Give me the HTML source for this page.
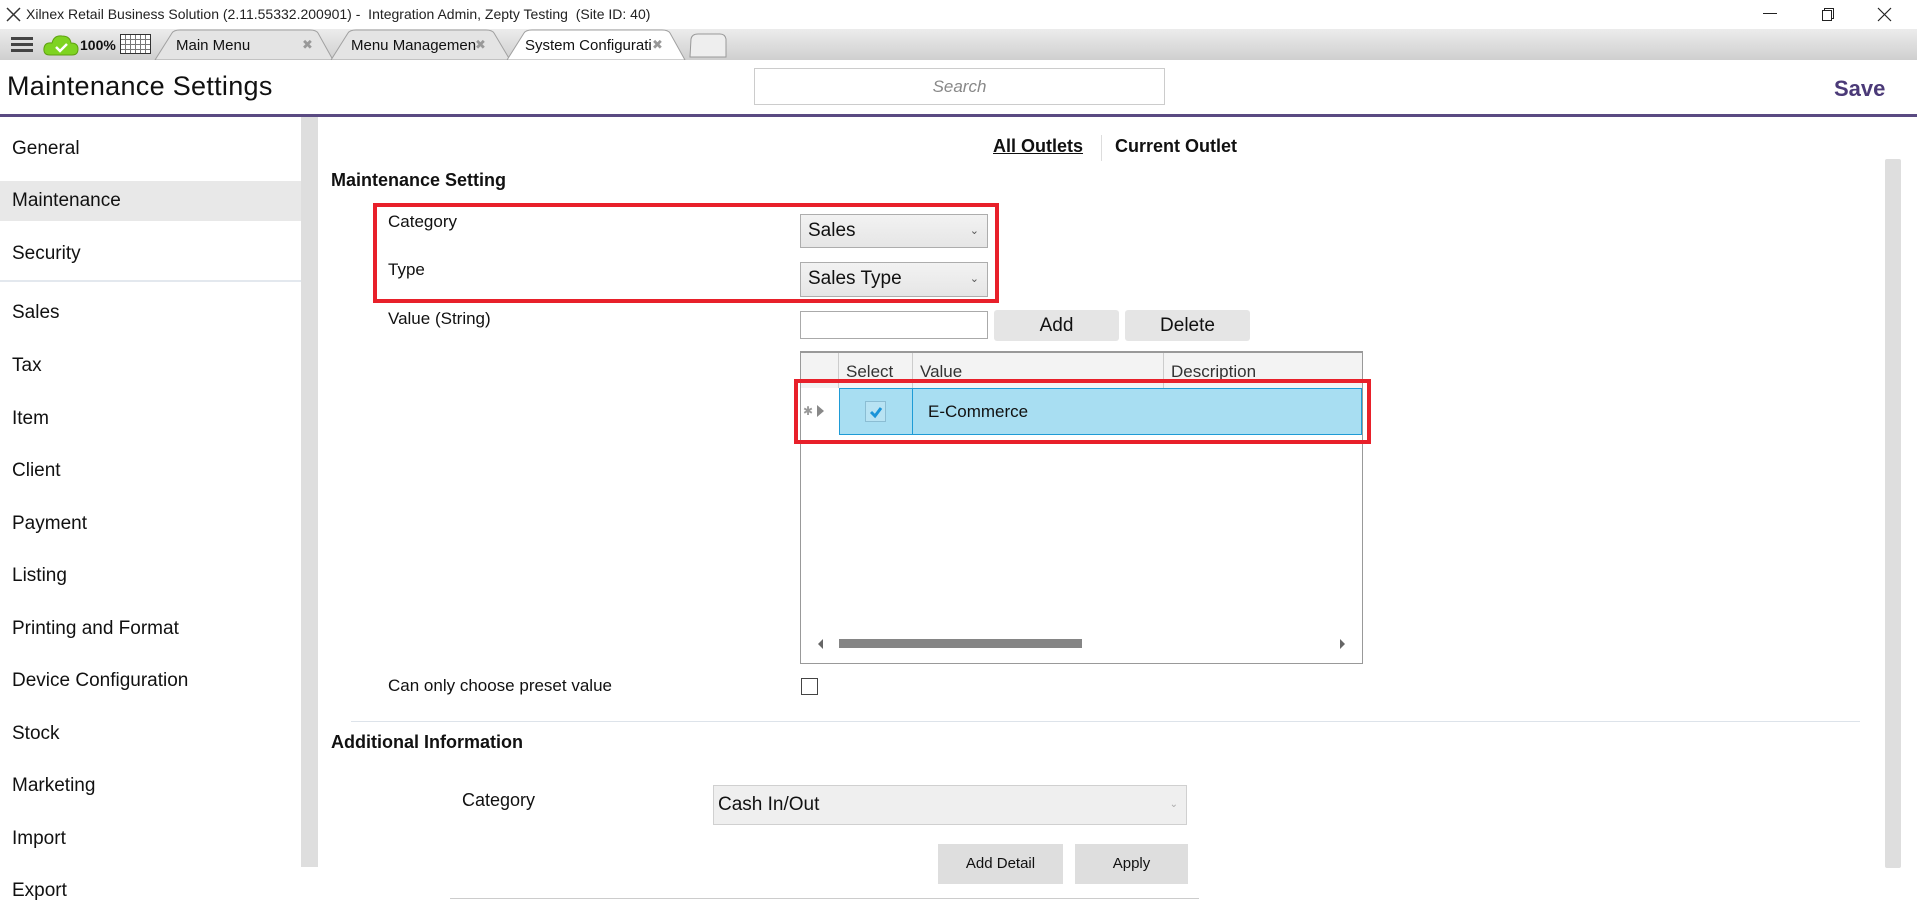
<!DOCTYPE html>
<html><head><meta charset="utf-8"><style>
*{margin:0;padding:0;box-sizing:border-box}
body{width:1917px;height:917px;position:relative;overflow:hidden;background:#fff;font-family:"Liberation Sans",sans-serif;color:#111}
.a{position:absolute;white-space:nowrap}
.nav{position:absolute;left:12px;font-size:19px;color:#111}
.lbl{font-size:17px}
.dd{position:absolute;border:1px solid #adadad;background:linear-gradient(#f2f2f2,#e6e6e6);font-size:19px;padding-left:7px;line-height:32px}
.dd i{position:absolute;right:8px;top:0;font-style:normal;font-size:11px;color:#555}
.btn{position:absolute;background:#e5e5e5;border-radius:3px;text-align:center;font-size:19px}
</style></head><body>
<!-- title bar -->
<svg class="a" style="left:6px;top:7px" width="15" height="15"><path d="M1 1 L14 14 M14 1 L1 14" stroke="#333" stroke-width="1.5"/></svg>
<div class="a" style="left:26px;top:6px;font-size:14px;color:#222">Xilnex Retail Business Solution (2.11.55332.200901) -&nbsp; Integration Admin, Zepty Testing&nbsp; (Site ID: 40)</div>
<div class="a" style="left:1763px;top:13px;width:14px;height:1px;background:#222"></div>
<div class="a" style="left:1824px;top:8px;width:10px;height:11px;border:1px solid #222"></div>
<div class="a" style="left:1822px;top:10px;width:10px;height:11px;border:1px solid #222;background:#fff"></div>
<svg class="a" style="left:1877px;top:7px" width="15" height="15"><path d="M1 1 L14 14 M14 1 L1 14" stroke="#222" stroke-width="1.2"/></svg>
<!-- tab bar -->
<div class="a" style="left:0;top:29px;width:1917px;height:31px;background:linear-gradient(#ececec,#cfcfcf)"></div>
<div class="a" style="left:11px;top:37px;width:22px;height:3px;background:#444;box-shadow:0 6px 0 #444,0 12px 0 #444"></div>
<svg class="a" style="left:42px;top:33px" width="38" height="24"><path d="M8 22 Q1 22 2 15 Q3 9 10 10 Q12 2 20 3 Q28 3 29 10 Q36 10 36 16 Q36 22 30 22Z" fill="#7ed321" stroke="#5ea010"/><path d="M14 14 l4 4 l7 -7" stroke="#fff" stroke-width="2.5" fill="none"/></svg>
<div class="a" style="left:80px;top:37px;font-size:14px;font-weight:bold">100%</div>
<div class="a" style="left:120px;top:34px;width:31px;height:20px;border:1px solid #333;background:#fff;background-image:linear-gradient(90deg,transparent 3px,#777 3px,#777 4px,transparent 4px),linear-gradient(transparent 3px,#777 3px,#777 4px,transparent 4px);background-size:5px 5px;background-position:1px 1px"></div>
<svg class="a" style="left:150px;top:29px" width="590" height="31">
<path d="M5 31 L22 4 Q24 1 30 1 L160 1 Q166 1 168 4 L183 31Z" fill="#e4e4e4" stroke="#a0a0a0"/>
<path d="M181 31 L198 4 Q200 1 206 1 L336 1 Q342 1 344 4 L360 31Z" fill="#e4e4e4" stroke="#a0a0a0"/>
<path d="M357 31 L374 4 Q376 1 382 1 L512 1 Q518 1 520 4 L535 31Z" fill="#fff" stroke="#a0a0a0"/>
<path d="M540 28 L541 10 Q542 5 548 5 L570 5 Q575 5 576 10 L576 28Z" fill="#eee" stroke="#999"/>
</svg>
<div class="a" style="left:176px;top:37px;font-size:15px">Main Menu</div>
<div class="a" style="left:302px;top:37px;font-size:13px;color:#999">✖</div>
<div class="a" style="left:351px;top:37px;font-size:15px">Menu Managemen</div>
<div class="a" style="left:475px;top:37px;font-size:13px;color:#999">✖</div>
<div class="a" style="left:525px;top:37px;font-size:15px">System Configurati</div>
<div class="a" style="left:652px;top:37px;font-size:13px;color:#999">✖</div>
<!-- header -->
<div class="a" style="left:7px;top:71px;font-size:27px;color:#111;letter-spacing:0.3px">Maintenance Settings</div>
<div class="a" style="left:754px;top:68px;width:411px;height:37px;border:1px solid #ccc;text-align:center;line-height:35px;font-size:17px;font-style:italic;color:#888">Search</div>
<div class="a" style="left:1834px;top:76px;font-size:22px;font-weight:bold;color:#4b3a78">Save</div>
<div class="a" style="left:0;top:114px;width:1917px;height:3px;background:#5a4a82"></div>
<!-- sidebar -->
<div class="a" style="left:0;top:181px;width:301px;height:40px;background:#e8e8e8"></div>
<div class="a" style="left:0;top:280px;width:301px;height:2px;background:#e3e8ee"></div>
<div class="a" style="left:301px;top:117px;width:17px;height:750px;background:#dedede"></div>
<div class="nav" style="top:138px">General</div>
<div class="nav" style="top:190px">Maintenance</div>
<div class="nav" style="top:243px">Security</div>
<div class="nav" style="top:302px">Sales</div>
<div class="nav" style="top:355px">Tax</div>
<div class="nav" style="top:408px">Item</div>
<div class="nav" style="top:460px">Client</div>
<div class="nav" style="top:513px">Payment</div>
<div class="nav" style="top:565px">Listing</div>
<div class="nav" style="top:618px">Printing and Format</div>
<div class="nav" style="top:670px">Device Configuration</div>
<div class="nav" style="top:723px">Stock</div>
<div class="nav" style="top:775px">Marketing</div>
<div class="nav" style="top:828px">Import</div>
<div class="nav" style="top:880px">Export</div>
<!-- content -->
<div class="a" style="left:993px;top:136px;font-size:18px;font-weight:bold;text-decoration:underline">All Outlets</div>
<div class="a" style="left:1101px;top:135px;width:1px;height:26px;background:#ddd"></div>
<div class="a" style="left:1115px;top:136px;font-size:18px;font-weight:bold">Current Outlet</div>
<div class="a" style="left:1885px;top:159px;width:16px;height:709px;background:#dedede;border-radius:2px"></div>
<div class="a" style="left:331px;top:170px;font-size:18px;font-weight:bold">Maintenance Setting</div>
<div class="a" style="left:373px;top:203px;width:626px;height:100px;border:4px solid #e8202a"></div>
<div class="a lbl" style="left:388px;top:212px">Category</div>
<div class="a lbl" style="left:388px;top:260px">Type</div>
<div class="dd" style="left:800px;top:214px;width:188px;height:34px">Sales<i>⌄</i></div>
<div class="dd" style="left:800px;top:262px;width:188px;height:35px">Sales Type<i>⌄</i></div>
<div class="a lbl" style="left:388px;top:309px">Value (String)</div>
<div class="a" style="left:800px;top:311px;width:188px;height:28px;border:1px solid #aaa"></div>
<div class="btn" style="left:994px;top:310px;width:125px;height:31px;line-height:31px">Add</div>
<div class="btn" style="left:1125px;top:310px;width:125px;height:31px;line-height:31px">Delete</div>
<!-- grid -->
<div class="a" style="left:800px;top:351px;width:563px;height:313px;border:1px solid #999;border-top:2px solid #999"></div>
<div class="a" style="left:801px;top:353px;width:561px;height:35px;background:#f3f3f3"></div>
<div class="a" style="left:838px;top:353px;width:1px;height:35px;background:#ccc"></div>
<div class="a" style="left:912px;top:353px;width:1px;height:35px;background:#ccc"></div>
<div class="a" style="left:1163px;top:353px;width:1px;height:35px;background:#ccc"></div>
<div class="a lbl" style="left:846px;top:362px;color:#333">Select</div>
<div class="a lbl" style="left:920px;top:362px;color:#333">Value</div>
<div class="a lbl" style="left:1171px;top:362px;color:#333">Description</div>
<div class="a" style="left:839px;top:388px;width:523px;height:47px;background:#a8def2;border:1px solid #1e9bd6"></div>
<div class="a" style="left:912px;top:388px;width:1px;height:47px;background:#1e9bd6"></div>
<div class="a" style="left:865px;top:401px;width:21px;height:21px;border:1px solid #8bbdd3;background:#b8e3f3"></div>
<svg class="a" style="left:867px;top:403px" width="18" height="18"><path d="M4 9 L8 13 L14 5" stroke="#1a94d8" stroke-width="3" fill="none"/></svg>
<div class="a lbl" style="left:928px;top:402px">E-Commerce</div>
<div class="a" style="left:803px;top:404px;font-size:12px;color:#999">✱</div>
<div class="a" style="left:817px;top:405px;width:0;height:0;border-left:7px solid #888;border-top:6px solid transparent;border-bottom:6px solid transparent"></div>
<div class="a" style="left:794px;top:379px;width:577px;height:65px;border:4px solid #e8202a"></div>
<div class="a" style="left:818px;top:639px;width:0;height:0;border-right:5px solid #666;border-top:5px solid transparent;border-bottom:5px solid transparent"></div>
<div class="a" style="left:839px;top:639px;width:243px;height:9px;background:#858585"></div>
<div class="a" style="left:1340px;top:639px;width:0;height:0;border-left:5px solid #666;border-top:5px solid transparent;border-bottom:5px solid transparent"></div>
<div class="a lbl" style="left:388px;top:676px">Can only choose preset value</div>
<div class="a" style="left:801px;top:678px;width:17px;height:17px;border:1px solid #444"></div>
<div class="a" style="left:351px;top:721px;width:1509px;height:1px;background:#dde3ea"></div>
<div class="a" style="left:331px;top:732px;font-size:18px;font-weight:bold">Additional Information</div>
<div class="a" style="left:462px;top:790px;font-size:18px">Category</div>
<div class="a" style="left:713px;top:785px;width:474px;height:40px;border:1px solid #d0d0d0;background:#efefef;font-size:19px;line-height:37px;padding-left:4px">Cash In/Out<span style="position:absolute;right:8px;font-size:10px;color:#aaa">⌄</span></div>
<div class="a" style="left:938px;top:844px;width:125px;height:40px;background:#dedede;text-align:center;line-height:40px;font-size:15px">Add Detail</div>
<div class="a" style="left:1075px;top:844px;width:113px;height:40px;background:#dedede;text-align:center;line-height:40px;font-size:15px">Apply</div>
<div class="a" style="left:450px;top:898px;width:749px;height:1px;background:#ccc"></div>
</body></html>
